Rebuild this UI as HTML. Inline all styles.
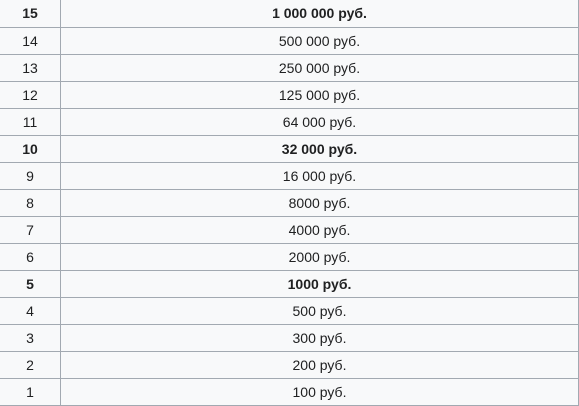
<!DOCTYPE html>
<html><head><meta charset="utf-8"><style>
html,body{margin:0;padding:0;background:#fff;width:579px;height:406px;overflow:hidden}
table{position:absolute;left:-1px;top:0;width:580px;border-collapse:collapse;font-family:"Liberation Sans",Arial,sans-serif;font-size:14px;color:#202122;background:#f8f9fa}
td{border:1px solid #a2a9b1;height:26px;padding:0;text-align:center;line-height:26px;box-sizing:border-box}
tr:first-child td{border-top:0;height:26px;line-height:27px}
td:first-child{width:61px}
tr.b td{font-weight:bold}
</style></head><body>
<table>
<tr class="b"><td>15</td><td>1 000 000 руб.</td></tr>
<tr><td>14</td><td>500 000 руб.</td></tr>
<tr><td>13</td><td>250 000 руб.</td></tr>
<tr><td>12</td><td>125 000 руб.</td></tr>
<tr><td>11</td><td>64 000 руб.</td></tr>
<tr class="b"><td>10</td><td>32 000 руб.</td></tr>
<tr><td>9</td><td>16 000 руб.</td></tr>
<tr><td>8</td><td>8000 руб.</td></tr>
<tr><td>7</td><td>4000 руб.</td></tr>
<tr><td>6</td><td>2000 руб.</td></tr>
<tr class="b"><td>5</td><td>1000 руб.</td></tr>
<tr><td>4</td><td>500 руб.</td></tr>
<tr><td>3</td><td>300 руб.</td></tr>
<tr><td>2</td><td>200 руб.</td></tr>
<tr><td>1</td><td>100 руб.</td></tr>
</table>
</body></html>
